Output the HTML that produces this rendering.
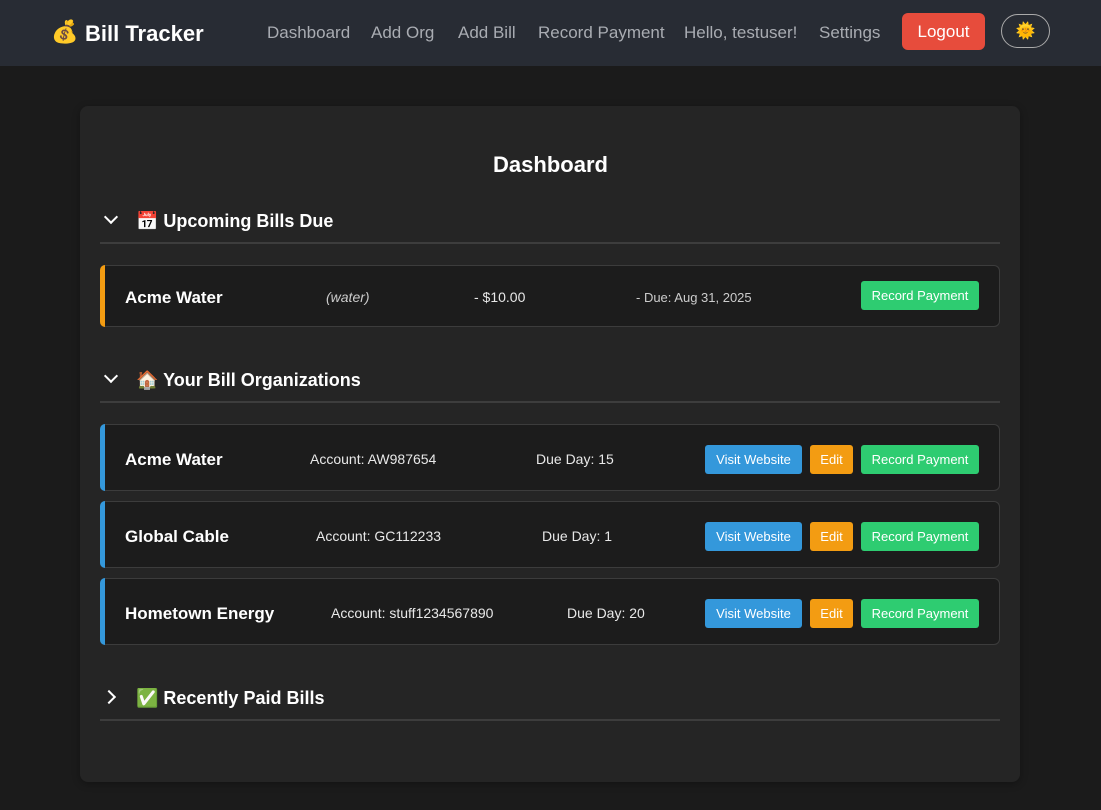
<!DOCTYPE html>
<html><head><meta charset="utf-8"><style>
*{margin:0;padding:0;box-sizing:border-box}
body{width:1101px;height:810px;background:#1b1b1b;font-family:"Liberation Sans","Noto Sans CJK JP",sans-serif;color:#fff;position:relative;overflow:hidden}
.a{position:absolute;white-space:nowrap}
nav{position:absolute;left:0;top:0;width:1101px;height:66px;background:#282c34}
.nl{font-size:17px;color:#a9acb2;top:23px}
.card{position:absolute;left:80px;top:106px;width:940px;height:676px;background:#252525;border-radius:8px;box-shadow:0 2px 8px rgba(0,0,0,.3)}
.h{font-size:18px;font-weight:bold}
.hr{position:absolute;left:100px;width:900px;height:2px;background:#3d3d3d}
.row{position:absolute;left:100px;width:900px;background:#1c1c1c;border:1px solid #3c3c3c;border-radius:6px}
.bar{position:absolute;left:-1px;top:-1px;bottom:-1px;width:5px;border-radius:6px 0 0 6px}
.btn{position:absolute;height:29px;border-radius:3px;font-size:13px;color:#fff;text-align:center;line-height:30px}
.g{background:#2ecc71}.b{background:#3498db}.o{background:#f39c12}
.nm{font-size:17px;font-weight:bold}
.t{font-size:14px;color:#e8e8e8}
.chev{position:absolute;width:10px;height:10px;border-right:2px solid #fff;border-bottom:2px solid #fff}
</style></head><body>
<nav>
<div class="a" style="left:51px;top:19px;font-size:22px">💰</div>
<div class="a" style="left:85px;top:21px;font-size:22px;font-weight:bold">Bill Tracker</div>
<div class="a nl" style="left:267px">Dashboard</div>
<div class="a nl" style="left:371px">Add Org</div>
<div class="a nl" style="left:458px">Add Bill</div>
<div class="a nl" style="left:538px">Record Payment</div>
<div class="a nl" style="left:684px">Hello, testuser!</div>
<div class="a nl" style="left:819px">Settings</div>
<div class="a" style="left:902px;top:13px;width:83px;height:37px;background:#e74c3c;border-radius:6px;font-size:17px;text-align:center;line-height:38px">Logout</div>
<div class="a" style="left:1001px;top:14px;width:49px;height:34px;border:1.5px solid #aaa;border-radius:17px;text-align:center;line-height:33px;font-size:16px">🌞</div>
</nav>
<div class="card"></div>
<div class="a h" style="left:0;width:1101px;text-align:center;top:152px;font-size:22px">Dashboard</div>

<div class="chev" style="left:106px;top:212px;transform:rotate(45deg)"></div>
<div class="a h" style="left:136px;top:211px">📅 Upcoming Bills Due</div>
<div class="hr" style="top:242px"></div>
<div class="row" style="top:265px;height:62px"><div class="bar" style="background:#f39c12"></div>
<div class="a nm" style="left:24px;top:22px">Acme Water</div>
<div class="a t" style="left:225px;top:23px;font-style:italic;color:#ccc">(water)</div>
<div class="a t" style="left:373px;top:23px">- $10.00</div>
<div class="a" style="left:535px;top:24px;font-size:13px;color:#ccc">- Due: Aug 31, 2025</div>
<div class="btn g" style="left:760px;top:15px;width:118px">Record Payment</div>
</div>

<div class="chev" style="left:106px;top:371px;transform:rotate(45deg)"></div>
<div class="a h" style="left:136px;top:370px">🏠 Your Bill Organizations</div>
<div class="hr" style="top:401px"></div>

<div class="row" style="top:424px;height:67px"><div class="bar" style="background:#3498db"></div>
<div class="a nm" style="left:24px;top:25px">Acme Water</div>
<div class="a t" style="left:209px;top:26px">Account: AW987654</div>
<div class="a t" style="left:435px;top:26px">Due Day: 15</div>
<div class="btn b" style="left:604px;top:20px;width:97px">Visit Website</div>
<div class="btn o" style="left:709px;top:20px;width:43px">Edit</div>
<div class="btn g" style="left:760px;top:20px;width:118px">Record Payment</div>
</div>
<div class="row" style="top:501px;height:67px"><div class="bar" style="background:#3498db"></div>
<div class="a nm" style="left:24px;top:25px">Global Cable</div>
<div class="a t" style="left:215px;top:26px">Account: GC112233</div>
<div class="a t" style="left:441px;top:26px">Due Day: 1</div>
<div class="btn b" style="left:604px;top:20px;width:97px">Visit Website</div>
<div class="btn o" style="left:709px;top:20px;width:43px">Edit</div>
<div class="btn g" style="left:760px;top:20px;width:118px">Record Payment</div>
</div>
<div class="row" style="top:578px;height:67px"><div class="bar" style="background:#3498db"></div>
<div class="a nm" style="left:24px;top:25px">Hometown Energy</div>
<div class="a t" style="left:230px;top:26px">Account: stuff1234567890</div>
<div class="a t" style="left:466px;top:26px">Due Day: 20</div>
<div class="btn b" style="left:604px;top:20px;width:97px">Visit Website</div>
<div class="btn o" style="left:709px;top:20px;width:43px">Edit</div>
<div class="btn g" style="left:760px;top:20px;width:118px">Record Payment</div>
</div>

<div class="chev" style="left:104px;top:692px;transform:rotate(-45deg)"></div>
<div class="a h" style="left:136px;top:688px">✅ Recently Paid Bills</div>
<div class="hr" style="top:719px"></div>
</body></html>
